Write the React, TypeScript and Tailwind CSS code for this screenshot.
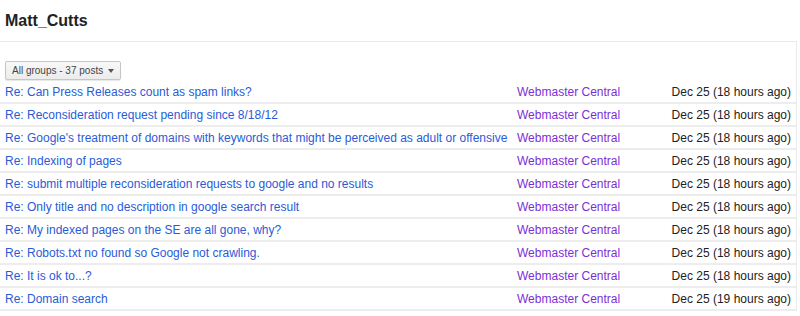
import React from 'react';

const topics = [
  ['Re: Can Press Releases count as spam links?', '18'],
  ['Re: Reconsideration request pending since 8/18/12', '18'],
  ["Re: Google's treatment of domains with keywords that might be perceived as adult or offensive", '18'],
  ['Re: Indexing of pages', '18'],
  ['Re: submit multiple reconsideration requests to google and no results', '18'],
  ['Re: Only title and no description in google search result', '18'],
  ['Re: My indexed pages on the SE are all gone, why?', '18'],
  ['Re: Robots.txt no found so Google not crawling.', '18'],
  ['Re: It is ok to...?', '18'],
  ['Re: Domain search', '19'],
];

const App = () => {
  return (
    <div className="h-[316px] w-[800px] bg-white font-['Liberation_Sans',Arial,sans-serif] text-[12px] text-[#222]">
      <div className="flex h-[41px] items-center pl-[5px]">
        <h1 className="text-[16px] font-bold text-[#222]">Matt_Cutts</h1>
      </div>
      <div className="mr-[3px] border-t border-r border-[#ebebeb] pt-[19px]">
        <div className="pl-[5px]">
          <button className="flex h-[19px] items-center gap-[5px] rounded-[2px] border border-[#c6c6c6] bg-gradient-to-b from-[#f8f8f8] to-[#ececec] px-[6px] text-[10px] text-[#444] shadow-[0_1px_1px_rgba(0,0,0,0.1)]">
            All groups - 37 posts
            <span className="h-0 w-0 border-x-[3.5px] border-t-[4px] border-x-transparent border-t-[#555]" />
          </button>
        </div>
        <div className="mt-[1px]">
          {topics.map(([title, hrs], i) => (
            <div
              key={i}
              className="flex h-[23px] items-center border-b-2 border-[#ededed] pl-[5px] pr-[5px]"
            >
              <a className="w-[512px] truncate text-[#2a5bd7]">{title}</a>
              <a className="flex-1 text-[#7b2fd6]">Webmaster Central</a>
              <span className="text-[#222]">Dec 25 ({hrs} hours ago)</span>
            </div>
          ))}
        </div>
      </div>
    </div>
  );
};

export default App;
